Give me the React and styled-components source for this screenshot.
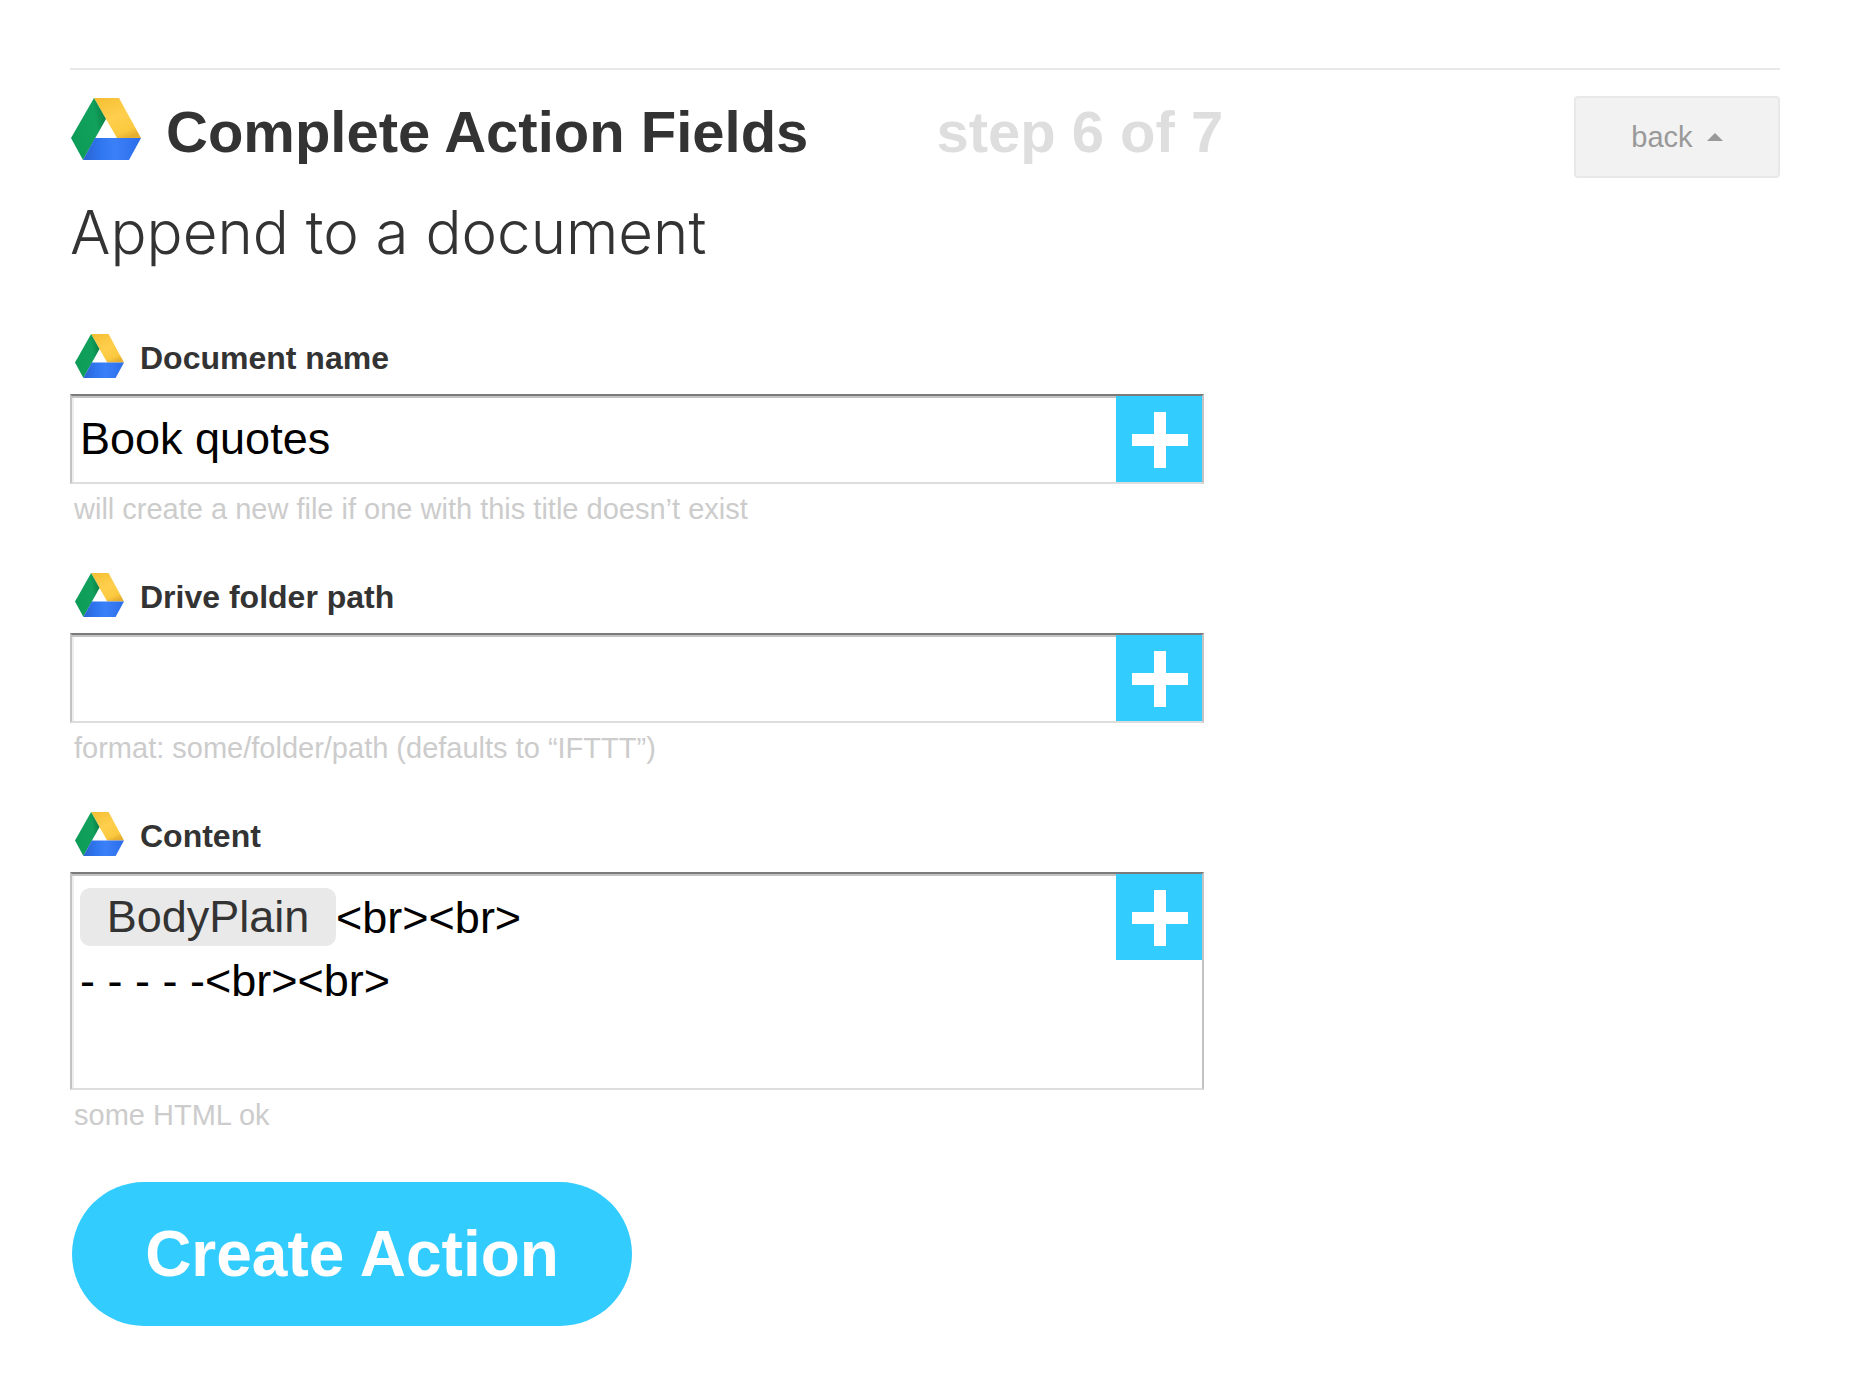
import React, { useState } from "react";
import styled, { createGlobalStyle } from "styled-components";

const GlobalStyle = createGlobalStyle`
  * {
    box-sizing: border-box;
  }

  body {
    margin: 0;
    background: #fff;
    color: #333;
    font-family: "Liberation Sans", Arial, sans-serif;
  }
`;

const Page = styled.main`
  padding: 68px 74px 56px 70px;
`;

const Header = styled.header`
  display: flex;
  align-items: flex-start;
  padding-top: 26px;
  border-top: 2px solid #e9e9e9;

  > svg {
    margin: 2px 1px;
  }
`;

const Title = styled.h1`
  margin: 0 0 0 24px;
  font-size: 58px;
  line-height: 72px;
  font-weight: bold;
`;

const Step = styled.span`
  flex: 1;
  margin-left: 128px;
  color: #dedede;
  font-size: 58px;
  line-height: 72px;
  font-weight: bold;
`;

const BackButton = styled.button`
  display: flex;
  align-items: center;
  justify-content: center;
  gap: 14px;
  width: 206px;
  height: 82px;
  padding: 0;
  border: 2px solid #e8e8e8;
  border-radius: 4px;
  background: #f2f2f2;
  color: #999;
  font-family: inherit;
  font-size: 29px;
  cursor: pointer;
`;

const Subtitle = styled.h2`
  margin: 14px 0 60px;
  font-family: Inter, "Liberation Sans", sans-serif;
  font-size: 60px;
  line-height: 80px;
  font-weight: 300;
`;

const Form = styled.form`
  max-width: 1134px;
`;

const Field = styled.div`
  margin-bottom: 44px;
`;

const FieldLabel = styled.label`
  display: flex;
  align-items: flex-start;
  gap: 16px;
  margin-bottom: 10px;
  padding-left: 5px;
  font-size: 32px;
  line-height: 52px;
  font-weight: bold;

  svg {
    margin-top: 2px;
  }
`;

const Box = styled.div`
  position: relative;
  display: flex;
  align-items: flex-start;
  border: 2px solid;
  border-color: #7b7b7b #c3c3c3 #ddd #c3c3c3;
  box-shadow: inset 0 2px #c3c3c3, inset 2px 0 #eee;
`;

const TextInput = styled.input`
  flex: 1;
  min-width: 0;
  height: 86px;
  padding: 0 8px;
  border: 0;
  outline: 0;
  background: transparent;
  color: #000;
  font-family: inherit;
  font-size: 45px;
`;

const TextArea = styled.textarea`
  flex: 1;
  min-width: 0;
  height: 214px;
  padding: 12px 8px;
  border: 0;
  outline: 0;
  resize: none;
  background: transparent;
  color: #000;
  font-family: inherit;
  font-size: 45px;
  line-height: 63px;
  text-indent: 256px;
`;

// sits over the indented start of the textarea
const Chip = styled.span`
  position: absolute;
  top: 14px;
  left: 8px;
  width: 256px;
  border-radius: 10px;
  background: #e9e9e9;
  font-size: 45px;
  line-height: 58px;
  text-align: center;
`;

const AddButton = styled.button`
  position: relative;
  display: flex;
  align-items: center;
  justify-content: center;
  width: 86px;
  height: 86px;
  padding: 2px 0 0 2px;
  border: 0;
  background: #3cf;
  cursor: pointer;
`;

const Hint = styled.p`
  margin: 7px 0 0;
  padding-left: 4px;
  color: #ccc;
  font-size: 29px;
  line-height: 36px;
`;

const SubmitButton = styled.button`
  display: block;
  width: 560px;
  height: 144px;
  margin: 49px 0 0 2px;
  border: 0;
  border-radius: 72px;
  background: #3cf;
  color: #fff;
  font-family: inherit;
  font-size: 64px;
  font-weight: bold;
  cursor: pointer;
`;

const DriveIcon = ({ id, width, height }) => (
  <svg width={width} height={height} viewBox="0 0 70 62" preserveAspectRatio="none" aria-hidden="true">
    <defs>
      <linearGradient id={`${id}-green`} x1="0" y1="0.6" x2="1" y2="0.3">
        <stop offset="0" stopColor="#0b9c58" />
        <stop offset="0.7" stopColor="#12a15d" />
        <stop offset="1" stopColor="#0a7f44" />
      </linearGradient>
      <linearGradient id={`${id}-yellow`} x1="0.2" y1="0" x2="0.7" y2="1">
        <stop offset="0" stopColor="#f6c136" />
        <stop offset="0.5" stopColor="#ffcf4d" />
        <stop offset="0.85" stopColor="#fbc93f" />
        <stop offset="1" stopColor="#e5af2f" />
      </linearGradient>
      <linearGradient id={`${id}-blue`} x1="0" y1="0" x2="1" y2="0">
        <stop offset="0" stopColor="#2a62d0" />
        <stop offset="0.3" stopColor="#2f76f0" />
        <stop offset="0.55" stopColor="#3b80f8" />
        <stop offset="1" stopColor="#2c6dea" />
      </linearGradient>
    </defs>
    <path d="M23 0H48L70 40H46L35 21Z" fill={`url(#${id}-yellow)`} />
    <path d="M23 0L35 21L12 62L0 40Z" fill={`url(#${id}-green)`} />
    <path d="M24 40H70L58 62H12Z" fill={`url(#${id}-blue)`} />
  </svg>
);

const PlusIcon = () => (
  <svg width="56" height="56" viewBox="0 0 56 56" aria-hidden="true">
    <path d="M22 0H34V22H56V34H34V56H22V34H0V22H22Z" fill="#fff" />
  </svg>
);

const App = () => {
  const [name, setName] = useState("Book quotes");
  const [folder, setFolder] = useState("");
  const [content, setContent] = useState("<br><br>\n- - - - -<br><br>");

  return (
    <>
      <GlobalStyle />
      <Page>
        <Header>
          <DriveIcon id="head" width={70} height={62} />
          <Title>Complete Action Fields</Title>
          <Step>step 6 of 7</Step>
          <BackButton type="button">
            back
            <svg width="16" height="8" viewBox="0 0 16 8" aria-hidden="true">
              <path d="M8 0L16 8H0Z" fill="#999" />
            </svg>
          </BackButton>
        </Header>
        <Subtitle>Append to a document</Subtitle>

        <Form onSubmit={(e) => e.preventDefault()}>
          <Field>
            <FieldLabel htmlFor="doc-name">
              <DriveIcon id="name" width={49} height={44} />
              Document name
            </FieldLabel>
            <Box>
              <TextInput id="doc-name" value={name} onChange={(e) => setName(e.target.value)} />
              <AddButton type="button" aria-label="Add ingredient">
                <PlusIcon />
              </AddButton>
            </Box>
            <Hint>will create a new file if one with this title doesn’t exist</Hint>
          </Field>

          <Field>
            <FieldLabel htmlFor="folder-path">
              <DriveIcon id="folder" width={49} height={44} />
              Drive folder path
            </FieldLabel>
            <Box>
              <TextInput id="folder-path" value={folder} onChange={(e) => setFolder(e.target.value)} />
              <AddButton type="button" aria-label="Add ingredient">
                <PlusIcon />
              </AddButton>
            </Box>
            <Hint>format: some/folder/path (defaults to “IFTTT”)</Hint>
          </Field>

          <Field>
            <FieldLabel htmlFor="content">
              <DriveIcon id="content" width={49} height={44} />
              Content
            </FieldLabel>
            <Box>
              <TextArea id="content" value={content} onChange={(e) => setContent(e.target.value)} />
              <Chip>BodyPlain</Chip>
              <AddButton type="button" aria-label="Add ingredient">
                <PlusIcon />
              </AddButton>
            </Box>
            <Hint>some HTML ok</Hint>
          </Field>

          <SubmitButton type="submit">Create Action</SubmitButton>
        </Form>
      </Page>
    </>
  );
};

export default App;
